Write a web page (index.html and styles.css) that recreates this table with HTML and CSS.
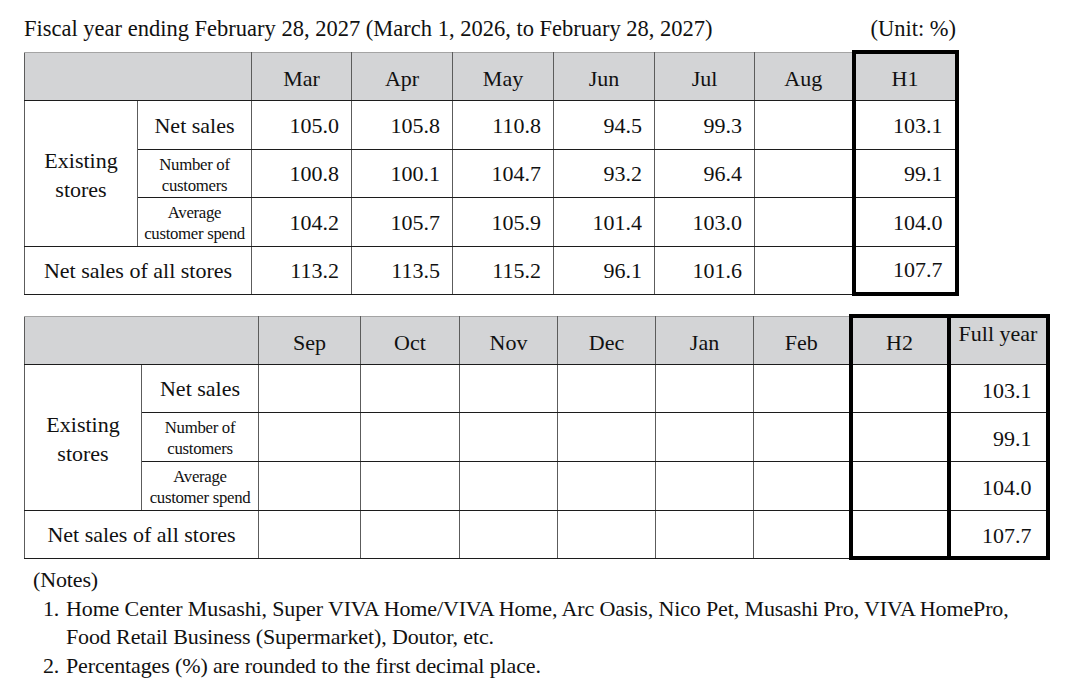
FILE: index.html
```html
<!DOCTYPE html>
<html lang="en">
<head>
<meta charset="utf-8">
<title>Monthly sales</title>
<link rel="stylesheet" href="styles.css">
</head>
<body>
<div class="page">
  <div class="caption">
    <span>Fiscal year ending February 28, 2027 (March 1, 2026, to February 28, 2027)</span>
    <span>(Unit: %)</span>
  </div>

  <table class="grid first">
    <colgroup>
      <col><col><col><col><col><col><col><col><col>
    </colgroup>
    <thead>
      <tr class="head r48">
        <th colspan="2"></th>
        <th>Mar</th><th>Apr</th><th>May</th><th>Jun</th><th>Jul</th><th>Aug</th>
        <th class="box">H1</th>
      </tr>
    </thead>
    <tbody>
      <tr class="r49">
        <th rowspan="3" class="group">Existing<br>stores</th>
        <th class="sub">Net sales</th>
        <td>105.0</td><td>105.8</td><td>110.8</td><td>94.5</td><td>99.3</td><td></td>
        <td class="box">103.1</td>
      </tr>
      <tr class="r48">
        <th class="sub small">Number of<br>customers</th>
        <td>100.8</td><td>100.1</td><td>104.7</td><td>93.2</td><td>96.4</td><td></td>
        <td class="box">99.1</td>
      </tr>
      <tr class="r49">
        <th class="sub small">Average<br>customer spend</th>
        <td>104.2</td><td>105.7</td><td>105.9</td><td>101.4</td><td>103.0</td><td></td>
        <td class="box">104.0</td>
      </tr>
      <tr class="last r48">
        <th colspan="2" class="all">Net sales of all stores</th>
        <td>113.2</td><td>113.5</td><td>115.2</td><td>96.1</td><td>101.6</td><td></td>
        <td class="box">107.7</td>
      </tr>
    </tbody>
  </table>

  <table class="grid second">
    <colgroup>
      <col><col><col><col><col><col><col><col><col><col>
    </colgroup>
    <thead>
      <tr class="head r48">
        <th colspan="2"></th>
        <th>Sep</th><th>Oct</th><th>Nov</th><th>Dec</th><th>Jan</th><th>Feb</th>
        <th class="box">H2</th>
        <th class="box full">Full year</th>
      </tr>
    </thead>
    <tbody>
      <tr class="r48">
        <th rowspan="3" class="group">Existing<br>stores</th>
        <th class="sub">Net sales</th>
        <td></td><td></td><td></td><td></td><td></td><td></td>
        <td class="box"></td>
        <td class="box fy">103.1</td>
      </tr>
      <tr class="r49">
        <th class="sub small">Number of<br>customers</th>
        <td></td><td></td><td></td><td></td><td></td><td></td>
        <td class="box"></td>
        <td class="box fy">99.1</td>
      </tr>
      <tr class="r49">
        <th class="sub small">Average<br>customer spend</th>
        <td></td><td></td><td></td><td></td><td></td><td></td>
        <td class="box"></td>
        <td class="box fy">104.0</td>
      </tr>
      <tr class="last r48">
        <th colspan="2" class="all">Net sales of all stores</th>
        <td></td><td></td><td></td><td></td><td></td><td></td>
        <td class="box"></td>
        <td class="box fy">107.7</td>
      </tr>
    </tbody>
  </table>

  <div class="notes">
    <div class="notes-title">(Notes)</div>
    <div class="note"><span class="num">1.</span><span class="txt">Home Center Musashi, Super VIVA Home/VIVA Home, Arc Oasis, Nico Pet, Musashi Pro, VIVA HomePro,<br>Food Retail Business (Supermarket), Doutor, etc.</span></div>
    <div class="note"><span class="num">2.</span><span class="txt">Percentages (%) are rounded to the first decimal place.</span></div>
  </div>
</div>
</body>
</html>
```

FILE: styles.css
```css
html, body {
  margin: 0;
  background: #ffffff;
}

body {
  font-family: "Liberation Serif", "Times New Roman", serif;
  color: #111111;
  font-size: 22px;
}

.page {
  padding: 16px 0 0 24px;
}

.caption {
  display: flex;
  justify-content: space-between;
  width: 932px;
  line-height: 26px;
  font-size: 22.5px;
}

.grid {
  border-collapse: collapse;
  table-layout: fixed;
  margin-top: 8px;
}

.grid th,
.grid td {
  font-weight: normal;
  font-size: 22px;
  line-height: 24px;
  padding: 2px 12px 0 12px;
  vertical-align: middle;
  border-top: 1px solid #1c1c1c;
  border-bottom: 1px solid #1c1c1c;
  border-left: 1px solid #5c5c5c;
  border-right: 1px solid #5c5c5c;
  white-space: nowrap;
  overflow: hidden;
}

.grid th {
  text-align: center;
}

.grid td {
  text-align: right;
}

.grid .head th {
  background: #d3d4d6;
  border-top-color: #a4a4a4;
  padding-top: 5px;
}

.r48 { height: 48px; }
.r49 { height: 49px; }

.grid .group {
  line-height: 29px;
  padding: 4px 4px 0 4px;
}

.grid .sub {
  padding: 2px 2px 0 2px;
}

.grid .sub.small {
  font-size: 16.8px;
  line-height: 21px;
  letter-spacing: -0.3px;
  padding-top: 3px;
}

.grid .all {
  padding: 2px 4px 0 4px;
}

.grid .box {
  border-left: 4px solid #000000;
  border-right: 4px solid #000000;
}

.grid .head .box {
  border-top: 4px solid #000000;
}

.grid .last .box {
  border-bottom: 4px solid #000000;
}

.grid .head .full {
  vertical-align: top;
  padding: 4px 2px 0 2px;
}

.grid .fy {
  padding-right: 14px;
  padding-top: 5px;
}

/* first table column widths */
.first { width: 932px; }
.first col:nth-child(1) { width: 113px; }
.first col:nth-child(2) { width: 114px; }
.first col:nth-child(3) { width: 100px; }
.first col:nth-child(4) { width: 101px; }
.first col:nth-child(5) { width: 101px; }
.first col:nth-child(6) { width: 101px; }
.first col:nth-child(7) { width: 100px; }
.first col:nth-child(8) { width: 99px; }
.first col:nth-child(9) { width: 103px; }

/* second table column widths */
.second {
  width: 1023px;
  margin-top: 18px;
}
.second col:nth-child(1) { width: 117px; }
.second col:nth-child(2) { width: 117px; }
.second col:nth-child(3) { width: 102px; }
.second col:nth-child(4) { width: 99px; }
.second col:nth-child(5) { width: 98px; }
.second col:nth-child(6) { width: 98px; }
.second col:nth-child(7) { width: 98px; }
.second col:nth-child(8) { width: 97px; }
.second col:nth-child(9) { width: 98px; }
.second col:nth-child(10) { width: 99px; }

.notes {
  margin-top: 6px;
  font-size: 22px;
  line-height: 28.7px;
  letter-spacing: -0.13px;
}

.notes-title {
  padding-left: 9px;
}

.note {
  display: flex;
  padding-left: 19px;
}

.note .num {
  flex: 0 0 23px;
}
```
